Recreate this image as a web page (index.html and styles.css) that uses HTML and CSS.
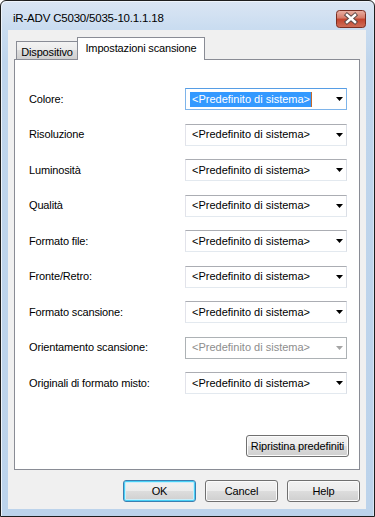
FILE: index.html
```html
<!DOCTYPE html>
<html>
<head>
<meta charset="utf-8">
<title>iR-ADV C5030/5035-10.1.1.18</title>
<link rel="stylesheet" href="styles.css">
</head>
<body>
<div class="window">
  <div class="titlebar">
    <span class="title">iR-ADV C5030/5035-10.1.1.18</span>
    <div class="close">
      <svg width="30" height="18" viewBox="0 0 30 18">
        <defs>
          <linearGradient id="cg" x1="0" y1="0" x2="0" y2="1">
            <stop offset="0" stop-color="#eab2a6"/>
            <stop offset="0.45" stop-color="#d57a68"/>
            <stop offset="0.5" stop-color="#c2432d"/>
            <stop offset="1" stop-color="#d0705a"/>
          </linearGradient>
        </defs>
        <rect x="0.5" y="0.5" width="29" height="17" rx="3" ry="3" fill="url(#cg)" stroke="#7a2e22"/>
        <path d="M11 5 L19 12 M19 5 L11 12" stroke="#5e4a48" stroke-width="4.4" stroke-linecap="square"/>
        <path d="M11 5 L19 12 M19 5 L11 12" stroke="#ffffff" stroke-width="2.4" stroke-linecap="square"/>
      </svg>
    </div>
  </div>
  <div class="client">
    <div class="tabs">
      <div class="tab">Dispositivo</div>
      <div class="tab active">Impostazioni scansione</div>
    </div>
    <div class="panel">
      <div class="rows">
        <span class="label">Colore:</span>
        <div class="combo focus"><span class="value sel">&lt;Predefinito di sistema&gt;</span><svg class="arrow" width="7" height="4" viewBox="0 0 7 4"><polygon points="0,0 7,0 3.5,4"/></svg></div>

        <span class="label">Risoluzione</span>
        <div class="combo"><span class="value">&lt;Predefinito di sistema&gt;</span><svg class="arrow" width="7" height="4" viewBox="0 0 7 4"><polygon points="0,0 7,0 3.5,4"/></svg></div>

        <span class="label">Luminosità</span>
        <div class="combo"><span class="value">&lt;Predefinito di sistema&gt;</span><svg class="arrow" width="7" height="4" viewBox="0 0 7 4"><polygon points="0,0 7,0 3.5,4"/></svg></div>

        <span class="label">Qualità</span>
        <div class="combo"><span class="value">&lt;Predefinito di sistema&gt;</span><svg class="arrow" width="7" height="4" viewBox="0 0 7 4"><polygon points="0,0 7,0 3.5,4"/></svg></div>

        <span class="label">Formato file:</span>
        <div class="combo"><span class="value">&lt;Predefinito di sistema&gt;</span><svg class="arrow" width="7" height="4" viewBox="0 0 7 4"><polygon points="0,0 7,0 3.5,4"/></svg></div>

        <span class="label">Fronte/Retro:</span>
        <div class="combo"><span class="value">&lt;Predefinito di sistema&gt;</span><svg class="arrow" width="7" height="4" viewBox="0 0 7 4"><polygon points="0,0 7,0 3.5,4"/></svg></div>

        <span class="label">Formato scansione:</span>
        <div class="combo"><span class="value">&lt;Predefinito di sistema&gt;</span><svg class="arrow" width="7" height="4" viewBox="0 0 7 4"><polygon points="0,0 7,0 3.5,4"/></svg></div>

        <span class="label">Orientamento scansione:</span>
        <div class="combo disabled"><span class="value">&lt;Predefinito di sistema&gt;</span><svg class="arrow" width="7" height="4" viewBox="0 0 7 4"><polygon points="0,0 7,0 3.5,4"/></svg></div>

        <span class="label">Originali di formato misto:</span>
        <div class="combo"><span class="value">&lt;Predefinito di sistema&gt;</span><svg class="arrow" width="7" height="4" viewBox="0 0 7 4"><polygon points="0,0 7,0 3.5,4"/></svg></div>
      </div>
      <div class="panel-foot">
        <button class="btn reset">Ripristina predefiniti</button>
      </div>
    </div>
    <div class="buttons">
      <button class="btn default">OK</button>
      <button class="btn">Cancel</button>
      <button class="btn">Help</button>
    </div>
  </div>
</div>
</body>
</html>
```

FILE: styles.css
```css
* { box-sizing: border-box; }

html, body {
  margin: 0;
  padding: 0;
  background: #ffffff;
}

body {
  width: 375px;
  height: 517px;
  font-family: "Liberation Sans", Arial, sans-serif;
  font-size: 11px;
  letter-spacing: -0.15px;
  color: #000;
}

.window {
  width: 375px;
  height: 517px;
  border: 1px solid #1e1e1e;
  border-radius: 6px 6px 0 0;
  background: linear-gradient(#dbe6f4 0px, #c9dcf0 28px, #bfd5ec 60px, #bcd3eb 100%);
  display: flex;
  flex-direction: column;
  box-shadow: inset 1px 1px 0 #eef4fb, inset -1px 0 0 #d6e4f3;
}

.titlebar {
  height: 29px;
  flex: none;
  display: flex;
  align-items: flex-start;
  justify-content: space-between;
  padding: 0 8px 0 12px;
}

.title {
  font-size: 11.5px;
  letter-spacing: -0.2px;
  line-height: 16px;
  margin-top: 9px;
  color: #000;
}

.close {
  margin-top: 9px;
  width: 30px;
  height: 18px;
  display: flex;
}

.client {
  flex: 1;
  margin: 0 8px 7px 7px;
  background: #f0f0f0;
  padding: 7px 6px 7px 6px;
  display: flex;
  flex-direction: column;
}

.tabs {
  height: 22px;
  flex: none;
  display: flex;
  align-items: flex-end;
  padding-left: 2px;
  position: relative;
  z-index: 1;
}

.tab {
  height: 18px;
  width: 62px;
  border: 1px solid #898c95;
  border-bottom: none;
  background: linear-gradient(#f3f3f3, #ebebeb 50%, #dddddd 50%, #cfcfcf);
  display: flex;
  justify-content: center;
  align-items: center;
  padding-top: 3px;
  line-height: 13px;
}

.tab.active {
  height: 23px;
  width: 128px;
  margin-left: -1px;
  margin-bottom: -1px;
  background: #ffffff;
  align-items: flex-start;
  padding-top: 4px;
}

.panel {
  flex: 1;
  background: #ffffff;
  border: 1px solid #898c95;
  display: flex;
  flex-direction: column;
  padding: 28px 12px 12px 14px;
}

.rows {
  display: grid;
  grid-template-columns: 1fr 162px;
  grid-auto-rows: 22px;
  row-gap: 13.5px;
  align-items: center;
}

.label {
  line-height: 13px;
  white-space: nowrap;
}

.combo {
  height: 22px;
  border: 1px solid;
  border-color: #abadb3 #dbdfe6 #e3e9ef #e2e3ea;
  background: #ffffff;
  display: flex;
  align-items: center;
  justify-content: space-between;
  padding: 0 3px 0 4px;
}

.combo .value {
  line-height: 15px;
  height: 15px;
  padding: 0 1px 0 2px;
  white-space: nowrap;
  letter-spacing: 0;
}

.combo .value.sel {
  background: #3399ff;
  color: #ffffff;
  border-right: 1px solid #c56a2c;
}

.combo.focus {
  border-color: #569de5 #7eb4ea #7eb4ea #7eb4ea;
}

.combo .arrow {
  fill: #000000;
  flex: none;
}

.combo.disabled {
  border-color: #adb2b5;
  color: #8d8d8d;
}

.combo.disabled .arrow {
  fill: #a5a5a5;
}

.panel-foot {
  margin-top: auto;
  display: flex;
  justify-content: flex-end;
  margin-right: -2px;
}

.btn {
  font-family: "Liberation Sans", Arial, sans-serif;
  font-size: 11px;
  letter-spacing: -0.15px;
  color: #000;
  height: 22px;
  width: 73px;
  border: 1px solid #707070;
  border-radius: 3px;
  background: linear-gradient(#f2f2f2 0%, #ebebeb 50%, #dddddd 50%, #cfcfcf 100%);
  box-shadow: inset 0 0 0 1px #fbfbfb;
  padding: 0;
  display: flex;
  align-items: center;
  justify-content: center;
}

.btn.reset {
  width: 103px;
}

.btn.default {
  border-color: #3c7fb1;
  box-shadow: inset 0 0 0 1px #48d0f6, inset 0 0 0 2px #c8eefb;
}

.buttons {
  flex: none;
  margin-top: 10px;
  display: flex;
  justify-content: flex-end;
  gap: 9px;
}
```
